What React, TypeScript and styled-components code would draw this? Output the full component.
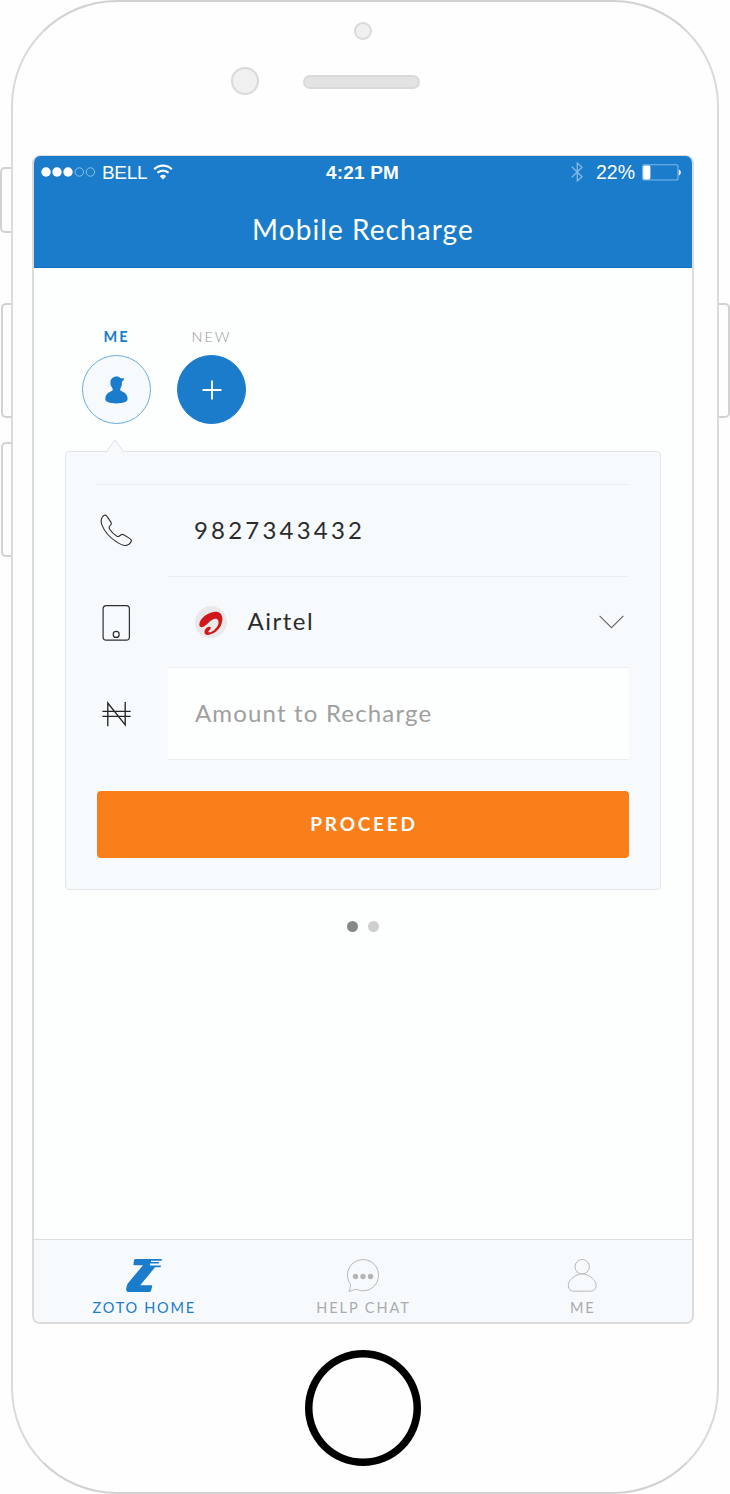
import React from 'react';
import styled, { createGlobalStyle } from 'styled-components';

const BLUE = '#1a7cca';
const PALE = '#f7fafd';
const EDGE = '#d2d2d2';

const GlobalStyle = createGlobalStyle`
  *, *::before, *::after { box-sizing: border-box; }
  body { margin: 0; background: #fefefe; font-family: Lato, "Liberation Sans", sans-serif; }
  button, input { font: inherit; border: 0; background: none; padding: 0; margin: 0; }
  svg { display: block; flex: none; }
`;

const Device = styled.div`
  width: 730px;
  height: 1494px;
  display: flex;
  overflow: hidden;
`;

const Rail = styled.div<{ $top: number; $width: number }>`
  flex: none;
  width: ${p => p.$width}px;
  padding-top: ${p => p.$top}px;
  display: flex;
  flex-direction: column;
`;

const SideKey = styled.div<{ $height: number; $gap?: number; $inset?: number; $right?: boolean }>`
  height: ${p => p.$height}px;
  margin-top: ${p => p.$gap ?? 0}px;
  margin-left: ${p => p.$inset ?? 0}px;
  border: 2px solid ${EDGE};
  ${p => (p.$right
    ? 'border-left: 0; border-radius: 0 5px 5px 0;'
    : 'border-right: 0; border-radius: 5px 0 0 5px;')}
`;

const Body = styled.div`
  flex: none;
  width: 708px;
  height: 1494px;
  border: 2px solid ${EDGE};
  border-left-color: #dadada;
  border-right-color: #dadada;
  border-radius: 106px;
  padding-left: 19px;
  display: flex;
  flex-direction: column;
  align-items: flex-start;
`;

const Sensor = styled.div`
  width: 18px;
  height: 18px;
  margin: 20px 0 0 321.5px;
  border: 2px solid #dadada;
  border-radius: 50%;
  background: #f0f0f0;
`;

const EarRow = styled.div`
  display: flex;
  align-items: center;
  gap: 44px;
  margin: 26px 0 0 199px;
  height: 29px;
`;

const Camera = styled.div`
  width: 28px;
  height: 28px;
  border: 2px solid #dadada;
  border-radius: 50%;
  background: #f0f0f0;
`;

const Speaker = styled.div`
  width: 117px;
  height: 14px;
  margin-top: 3px;
  border: 2px solid #dadada;
  border-radius: 7px;
  background: #e3e3e3;
`;

const Screen = styled.div`
  width: 662px;
  height: 1169px;
  margin-top: 60px;
  border: 2px solid #dcdcdc;
  border-top-width: 1px;
  border-radius: 8px;
  overflow: hidden;
  background: #fdfefe;
  display: flex;
  flex-direction: column;
`;

const Header = styled.header`
  height: 112px;
  flex: none;
  background: ${BLUE};
  border-bottom: 1px solid #176fbf;
  color: #fff;
`;

const StatusBar = styled.div`
  height: 33px;
  display: grid;
  grid-template-columns: 1fr auto 1fr;
  align-items: center;
  padding: 0 11px 0 7px;
  font: 19.5px/33px "Liberation Sans", Arial, sans-serif;
  svg { margin-bottom: 1px; }
`;

const StatusSide = styled.div<{ $end?: boolean }>`
  display: flex;
  align-items: center;
  justify-content: ${p => (p.$end ? 'flex-end' : 'flex-start')};
  gap: ${p => (p.$end ? 7 : 6)}px;
`;

const Network = styled.span`
  font-size: 19px;
  letter-spacing: -0.3px;
`;

const Charge = styled.span`
  margin-left: 6px;
`;

const Clock = styled.div`
  padding-left: 3px;
  font-size: 19px;
  font-weight: 700;
  letter-spacing: 0.2px;
`;

const Title = styled.h1`
  margin: 0;
  padding-top: 21px;
  text-align: center;
  font-size: 28px;
  line-height: 38px;
  font-weight: 400;
  letter-spacing: 1.07px;
`;

const People = styled.div`
  display: flex;
  gap: 26px;
  padding: 60px 0 0 48px;
`;

const Person = styled.div`
  width: 69px;
  display: flex;
  flex-direction: column;
  align-items: center;
`;

const PersonName = styled.div<{ $active?: boolean }>`
  font-size: 14.5px;
  line-height: 18px;
  letter-spacing: 1.9px;
  font-weight: ${p => (p.$active ? 700 : 300)};
  color: ${p => (p.$active ? BLUE : '#989898')};
`;

const Avatar = styled.div<{ $solid?: boolean }>`
  width: 69px;
  height: 69px;
  margin-top: 9px;
  border-radius: 50%;
  border: 1px solid ${p => (p.$solid ? BLUE : '#6badde')};
  background: ${p => (p.$solid ? BLUE : PALE)};
  display: flex;
  align-items: center;
  justify-content: center;
`;

const CardWrap = styled.div`
  margin: 15px 31px 0;
`;

const Notch = styled.svg`
  margin: 0 0 -2px 40px;
  position: relative;
`;

const Card = styled.section`
  height: 439px;
  padding: 32px 31px 0;
  border: 1px solid #e3e5e8;
  border-radius: 4px;
  background: ${PALE};
`;

const Row = styled.div<{ $height: number; $ruled?: boolean }>`
  display: flex;
  height: ${p => p.$height}px;
  border-top: ${p => (p.$ruled ? '1px solid #eceef1' : '0')};
`;

const RowIcon = styled.div`
  width: 71px;
  display: flex;
  align-items: center;
`;

const Field = styled.div<{ $fill?: boolean; $spacing: number; $indent: number }>`
  flex: 1;
  display: flex;
  align-items: center;
  padding-left: ${p => p.$indent}px;
  border-bottom: 1px solid #eceef1;
  background: ${p => (p.$fill ? '#fdfefe' : 'transparent')};
  color: ${p => (p.$fill ? '#a0a0a0' : '#2c2c2c')};
  font-size: 24px;
  letter-spacing: ${p => p.$spacing}px;
  white-space: nowrap;
`;

const Value = styled.span`
  flex: 1;
  padding-bottom: 3px;
`;

const Carrier = styled(Value)`
  margin-left: 20.5px;
`;

const Proceed = styled.button`
  display: block;
  width: 532px;
  height: 67px;
  margin-top: 31px;
  padding: 0 0 2px 2px;
  border-radius: 4px;
  background: #fa7e1a;
  color: #fff;
  font-size: 19px;
  font-weight: 700;
  letter-spacing: 2.75px;
`;

const Pager = styled.div`
  display: flex;
  justify-content: center;
  gap: 10px;
  margin-top: 31px;
`;

const PageDot = styled.i<{ $on?: boolean }>`
  width: 11px;
  height: 11px;
  border-radius: 50%;
  background: ${p => (p.$on ? '#878787' : '#cfcfcf')};
`;

const TabBar = styled.nav`
  height: 83px;
  margin-top: auto;
  flex: none;
  border-top: 1px solid #dcdee0;
  background: ${PALE};
  display: grid;
  grid-template-columns: repeat(3, 1fr);
`;

const Tab = styled.div<{ $active?: boolean }>`
  display: flex;
  flex-direction: column;
  align-items: center;
  padding: 19px 0 0 1px;
  font-size: 14.5px;
  line-height: 18px;
  letter-spacing: ${p => (p.$active ? 1.75 : 1.95)}px;
  color: ${p => (p.$active ? BLUE : '#ababab')};
  svg { margin: 0 1px 7px 0; }
`;

const HomeButton = styled.div`
  width: 116px;
  height: 116px;
  margin: 26px 0 0 273px;
  box-shadow: inset 0 0 0 7.5px #000;
  border-radius: 50%;
`;

const Signal = () => (
  <svg width="55" height="12" viewBox="0 0 55 12">
    {[5, 16, 27].map(x => <circle key={x} cx={x} cy="6" r="4.7" fill="#fff" />)}
    {[38.3, 49.4].map(x => <circle key={x} cx={x} cy="6" r="4.2" fill="none" stroke="#8cc0ea" />)}
  </svg>
);

const Wifi = () => (
  <svg width="20" height="16" viewBox="0 0 20 16" fill="none" stroke="#fff" strokeWidth="2.2">
    <path d="M1.2 5.2a12.8 12.8 0 0 1 17.6 0" />
    <path d="M4.4 8.8a8.2 8.2 0 0 1 11.2 0" />
    <path d="M10 15.5 6.8 12.2a4.8 4.8 0 0 1 6.4 0Z" fill="#fff" stroke="none" />
  </svg>
);

const Bluetooth = () => (
  <svg width="12" height="20" viewBox="0 0 12 20" fill="none" stroke="#83b9e4" strokeWidth="1.3">
    <path d="M.8 4.8 11 14.8 6.3 19V1L11 5.2.8 15.2" />
  </svg>
);

const Battery = () => (
  <svg width="39" height="17" viewBox="0 0 39 17">
    <rect x=".6" y=".8" width="35.4" height="15.2" rx="2" fill="none" stroke="#7fb8e8" strokeWidth="1.1" />
    <rect x="1.2" y="1.4" width="7.2" height="14" rx="1.4" fill="#fff" />
    <path d="M36.8 5.6c2.6.6 2.6 5.2 0 5.8Z" fill="#fff" />
  </svg>
);

const Bust = () => (
  <svg width="23" height="28" viewBox="0 0 23 28" fill={BLUE}>
    <path d="M11.5.6c1.600 0 2.800.5 3.700 1.300 1.300.5 2.500.5 3.800.4-.2 1.700-1 2.900-2.100 3.400.2 3.200-.4 5-1.600 6.800-.5 1.800.3 2.400 2 3 3.600 1.200 5.300 4 5.300 7.600 0 3-4.600 4.300-11.200 4.300S.3 26.100.3 23.100c0-3.600 1.800-6.400 5.300-7.600 1.700-.6 2.500-1.200 2-3C6.200 10.800 5.400 9 5.400 6.600 5.400 2.900 8 .6 11.500.6Z" />
  </svg>
);

const Plus = () => (
  <svg width="20" height="20" viewBox="0 0 20 20" stroke="#fff" strokeWidth="1.8" strokeLinecap="round">
    <path d="M10 1.200v17.600M1.200 10h17.600" />
  </svg>
);

const Handset = () => (
  <svg width="40" height="34" viewBox="0 0 40 34" fill="none" stroke="#2f2f2f" strokeWidth="1.1" strokeLinejoin="round">
    <path d="M7.300 1.200C8.500.8 9.300 1.300 10 2.400l4.100 6c.5.9.4 1.600-.2 2.300l-1.500 1.800c-.6.8-.5 1.500.1 2.500 1.800 2.900 4.500 5.500 7.400 7.200 1 .5 1.700.4 2.500-.2l1.800-1.300c.8-.5 1.600-.5 2.400 0l6 3.700c1.600 1 2.200 2 1.600 3.200-.9 2-2.800 3.400-4.900 3.800-3.100.4-6.500-1.200-10.500-4C12.500 23.200 7.500 17.400 5.100 11.400 3.700 8 3.800 5.600 5.200 3.300c.6-.9 1.200-1.700 2.100-2.100Z" />
  </svg>
);

const Tablet = () => (
  <svg width="40" height="36" viewBox="0 0 40 36" fill="none" stroke="#2f2f2f" strokeWidth="1.2">
    <rect x="6.100" y=".7" width="26.300" height="34.500" rx="3.200" />
    <circle cx="19.200" cy="29.400" r="3" />
  </svg>
);

const Naira = () => (
  <svg width="40" height="26" viewBox="0 0 40 26" fill="none" stroke="#252525" strokeWidth="1.35">
    <path d="M10.800 25.200V2l17.400 21.800V1M5.400 10.300h28.200M5.400 15.300h28.200" />
  </svg>
);

const AirtelMark = () => (
  <svg width="32" height="32" viewBox="0 0 96 96">
    <circle cx="48" cy="48" r="48" fill="#e9e9e9" />
    <path
      d="M14 61C10 50 20 35 33 27 47 18 67 13 77 23 86 34 83 55 70 70 60 81 44 89 34 86 25 83 28 71 35 65 42 60 50 63 47 68 44 72 38 76 41 79 49 81 63 70 69 57 74 45 68 36 57 39 44 43 38 56 26 62 21 64 16 64 14 61Z"
      fill="#d0181c"
    />
  </svg>
);

const ChevronIcon = styled.svg`
  margin-right: 5px;
`;

const Chevron = () => (
  <ChevronIcon width="25" height="14" viewBox="0 0 25 14" fill="none" stroke="#666" strokeWidth="1.1">
    <path d="M.6.8 12.500 12.700 24.400.8" />
  </ChevronIcon>
);

const ZotoMark = () => (
  <svg width="36" height="33" viewBox="0 0 36 33" fill={BLUE}>
    <path d="M9.500 0H36l-.5 1.800H25v1.100h8.200L32.700 4.600H24v2H35l-.5 1.700H29L14.200 26.200h11.300c.6 0 .8.400.7 1l-1 4c-.3 1.200-.9 1.800-2 1.800H3c-2.200 0-3.200-1.500-2.700-4l.6-2.600C1.100 25.400 1.700 24.500 2.600 23.500L17 6.200H8.600c-1 0-1.300-.5-1.100-1.400l.5-3.200C8.200.5 8.600 0 9.500 0Z" />
  </svg>
);

const ChatBubble = () => (
  <svg width="34" height="33" viewBox="0 0 34 33">
    <path
      d="M17 .6C25.800.6 32.500 7.500 32.500 16.200S25.800 31.800 17 31.800c-2.600 0-4.600-.8-6.800-1.600-2.800.7-4.400 1.400-7.300 2.300.9-2.400 1.500-4 1.600-7-1.800-2.800-3-5.600-3-9.300C1.500 7.500 8.200.6 17 .6Z"
      fill="none"
      stroke="#b8b8b8"
    />
    {[9.500, 17, 24.500].map(x => <circle key={x} cx={x} cy="17.500" r="2.700" fill="#b5b5b5" />)}
  </svg>
);

const Profile = () => (
  <svg width="30" height="33" viewBox="0 0 30 33" fill="none" stroke="#b8b8b8">
    <circle cx="15.200" cy="7.700" r="7.200" />
    <path d="M10.500 16c-5.400 2-9.200 6-9.200 10.800 0 3.400 2.400 5.400 5.600 5.400h16.600c3.200 0 5.600-2 5.600-5.400 0-4.800-3.800-8.800-9.200-10.800-3.100-1.500-6.300-1.500-9.400 0Z" />
  </svg>
);

export default function App() {
  return (
    <>
      <GlobalStyle />
      <Device>
        <Rail $top={167} $width={11}>
          <SideKey $height={66} />
          <SideKey $height={115} $gap={70} $inset={1} />
          <SideKey $height={115} $gap={24} $inset={1} />
        </Rail>
        <Body>
          <Sensor />
          <EarRow>
            <Camera />
            <Speaker />
          </EarRow>
          <Screen>
            <Header>
              <StatusBar>
                <StatusSide>
                  <Signal />
                  <Network>BELL</Network>
                  <Wifi />
                </StatusSide>
                <Clock>4:21 PM</Clock>
                <StatusSide $end>
                  <Bluetooth />
                  <Charge>22%</Charge>
                  <Battery />
                </StatusSide>
              </StatusBar>
              <Title>Mobile Recharge</Title>
            </Header>
            <People>
              <Person>
                <PersonName $active>ME</PersonName>
                <Avatar><Bust /></Avatar>
              </Person>
              <Person>
                <PersonName>NEW</PersonName>
                <Avatar $solid><Plus /></Avatar>
              </Person>
            </People>
            <CardWrap>
              <Notch width="20" height="14" viewBox="0 0 20 14">
                <path d="M1 13.500 9 2q1-1.200 2 0l8 11.500" fill={PALE} stroke="#dfe1e4" />
              </Notch>
              <Card>
                <Row $height={93} $ruled>
                  <RowIcon><Handset /></RowIcon>
                  <Field $spacing={3.2} $indent={26}><Value>9827343432</Value></Field>
                </Row>
                <Row $height={91}>
                  <RowIcon><Tablet /></RowIcon>
                  <Field $spacing={1.5} $indent={27}>
                    <AirtelMark />
                    <Carrier>Airtel</Carrier>
                    <Chevron />
                  </Field>
                </Row>
                <Row $height={92}>
                  <RowIcon><Naira /></RowIcon>
                  <Field $fill $spacing={1.17} $indent={27}><Value>Amount to Recharge</Value></Field>
                </Row>
                <Proceed>PROCEED</Proceed>
              </Card>
            </CardWrap>
            <Pager>
              <PageDot $on />
              <PageDot />
            </Pager>
            <TabBar>
              <Tab $active><ZotoMark />ZOTO HOME</Tab>
              <Tab><ChatBubble />HELP CHAT</Tab>
              <Tab><Profile />ME</Tab>
            </TabBar>
          </Screen>
          <HomeButton />
        </Body>
        <Rail $top={303} $width={11}>
          <SideKey $height={115} $right />
        </Rail>
      </Device>
    </>
  );
}
